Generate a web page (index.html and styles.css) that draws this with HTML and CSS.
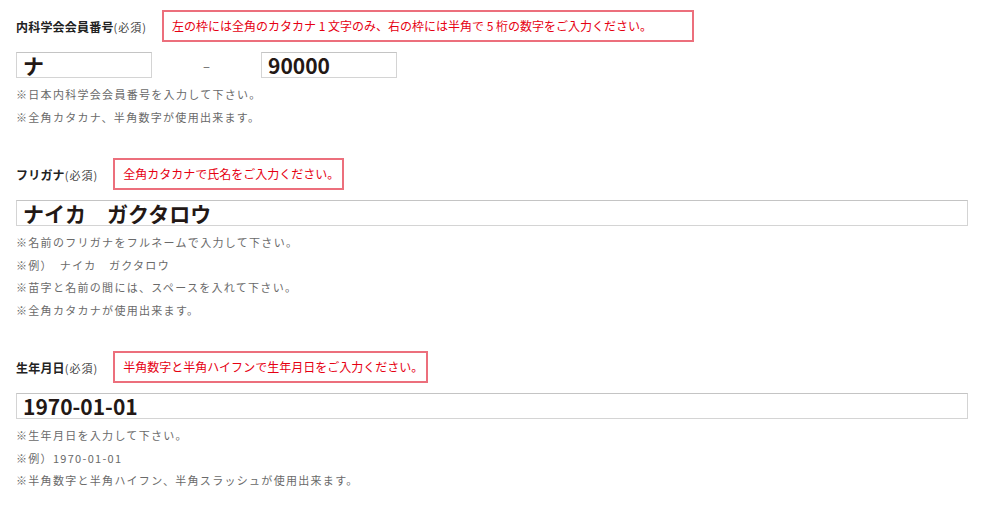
FILE: index.html
```html
<!DOCTYPE html>
<html lang="ja">
<head>
  <meta charset="UTF-8">
  <title>会員情報入力</title>
  <link rel="stylesheet" href="styles.css">
</head>
<body>
  <div class="form">
    <!-- 会員番号 -->
    <div class="field">
      <div class="field__head">
        <p class="field__label">内科学会会員番号<span class="field__req">(必須)</span></p>
        <p class="field__error field__error--wide">左の枠には全角のカタカナ 1 文字のみ、右の枠には半角で 5 桁の数字をご入力ください。</p>
      </div>
      <div class="field__pair">
        <input class="field__input field__input--short" type="text" value="ナ">
        <span class="field__dash">–</span>
        <input class="field__input field__input--short" type="text" value="90000">
      </div>
      <ul class="field__notes">
        <li>※日本内科学会会員番号を入力して下さい。</li>
        <li>※全角カタカナ、半角数字が使用出来ます。</li>
      </ul>
    </div>

    <!-- フリガナ -->
    <div class="field">
      <div class="field__head">
        <p class="field__label">フリガナ<span class="field__req">(必須)</span></p>
        <p class="field__error">全角カタカナで氏名をご入力ください。</p>
      </div>
      <input class="field__input" type="text" value="ナイカ　ガクタロウ">
      <ul class="field__notes">
        <li>※名前のフリガナをフルネームで入力して下さい。</li>
        <li>※例）　ナイカ　ガクタロウ</li>
        <li>※苗字と名前の間には、スペースを入れて下さい。</li>
        <li>※全角カタカナが使用出来ます。</li>
      </ul>
    </div>

    <!-- 生年月日 -->
    <div class="field">
      <div class="field__head">
        <p class="field__label">生年月日<span class="field__req">(必須)</span></p>
        <p class="field__error">半角数字と半角ハイフンで生年月日をご入力ください。</p>
      </div>
      <input class="field__input" type="text" value="1970-01-01">
      <ul class="field__notes">
        <li>※生年月日を入力して下さい。</li>
        <li>※例）1970-01-01</li>
        <li>※半角数字と半角ハイフン、半角スラッシュが使用出来ます。</li>
      </ul>
    </div>
  </div>
</body>
</html>
```

FILE: styles.css
```css
* {
  margin: 0;
  padding: 0;
  box-sizing: border-box;
}

body {
  background-color: #fff;
  font-family: "Noto Sans CJK JP", "Noto Sans", sans-serif;
  color: #333;
}

.form {
  width: 968px;
  padding: 10px 0 0 16px;
}

.field {
  margin-bottom: 30px;
}

.field__head {
  display: flex;
  align-items: center;
  gap: 15px;
}

.field__label {
  font-size: 12px;
  font-weight: bold;
  color: #222;
  letter-spacing: 0.2px;
}

.field__req {
  font-size: 11px;
  font-weight: normal;
  color: #444;
  letter-spacing: 1px;
}

.field__error {
  border: 2px solid #ec6f7c;
  color: #e60012;
  font-size: 12px;
  line-height: 16px;
  padding: 6px 3px 6px 8px;
}

.field__error--wide {
  padding-right: 40px;
}

.field__pair {
  display: flex;
  align-items: center;
}

.field__dash {
  width: 109px;
  text-align: center;
  color: #666;
  font-size: 13px;
}

.field__input {
  display: block;
  width: 100%;
  height: 26px;
  margin-top: 10px;
  padding: 0 6px;
  border: 1px solid #d4d4d4;
  border-top-color: #c4c4c4;
  background: #fff;
  font-family: "Noto Sans CJK JP", "Noto Sans", sans-serif;
  font-size: 21px;
  font-weight: bold;
  color: #231815;
  outline: none;
}

.field__input--short {
  width: 136px;
}

.field__pair .field__dash {
  margin-top: 10px;
}

.field__notes {
  list-style: none;
  margin-top: 5px;
}

.field__notes li {
  font-size: 11px;
  line-height: 22.5px;
  letter-spacing: 1.3px;
  color: #6a6a6a;
}
```
